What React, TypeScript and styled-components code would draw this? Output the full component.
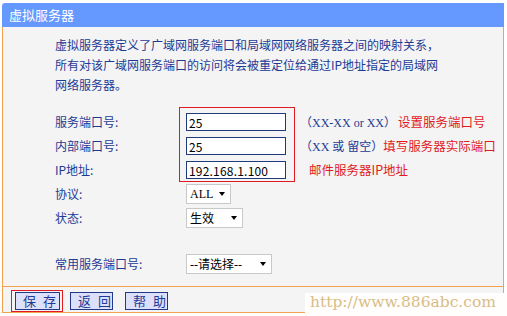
import React from "react";
import styled, { createGlobalStyle } from "styled-components";

const navy = "#1d3a94";
const orange = "#f0a24c";
const red = "#e01b1f";

const GlobalStyle = createGlobalStyle`
  html, body {
    margin: 0;
    padding: 0;
    background: #ffffff;
  }
  body {
    font-family: "Noto Sans CJK SC", "Liberation Sans", sans-serif;
    font-size: 12px;
  }
`;

const Page = styled.div`
  position: relative;
  width: 507px;
  height: 316px;
  padding: 3px 3px 0 2px;
  box-sizing: border-box;
  overflow: hidden;
`;

const Header = styled.div`
  height: 24px;
  background: #6699ff;
  border-top-left-radius: 3px;
  color: #ffffff;
  font-size: 13px;
  line-height: 24px;
  padding-left: 7px;
`;

const Content = styled.div`
  background: #f4f4f4;
  border: 1px solid ${orange};
  border-top: none;
  padding: 8px 0 12px 52px;
`;

const Description = styled.p`
  margin: 0;
  color: ${navy};
  line-height: 20px;
  white-space: nowrap;
`;

const FormBlock = styled.div`
  display: flex;
  align-items: flex-start;
  margin-top: 12px;
`;

const Column = styled.div<{ $width?: number; $padLeft?: number }>`
  display: flex;
  flex-direction: column;
  gap: 6px;
  padding-top: 6px;
  padding-left: ${({ $padLeft }) => $padLeft ?? 0}px;
  width: ${({ $width }) => ($width ? `${$width}px` : "auto")};
`;

const Label = styled.div`
  height: 18px;
  line-height: 18px;
  color: ${navy};
  white-space: nowrap;
`;

const RedBox = styled.div`
  display: flex;
  flex-direction: column;
  gap: 6px;
  border: 1px solid ${red};
  padding: 5px 8px 2px 6px;
`;

const TextInput = styled.input`
  width: 100px;
  height: 18px;
  box-sizing: border-box;
  margin: 0;
  border: 1px solid #1f3b7c;
  background: #ffffff;
  padding: 0 2px;
  font-family: "Noto Sans CJK SC", "Liberation Sans", sans-serif;
  font-size: 12px;
  letter-spacing: 0.2px;
  color: #000000;
  outline: none;
`;

const Hint = styled.div<{ $indent?: number }>`
  height: 18px;
  line-height: 18px;
  color: ${navy};
  white-space: nowrap;
  font-family: "Liberation Serif", "Noto Sans CJK SC", serif;
  font-size: 12px;
  padding-left: ${({ $indent }) => $indent ?? 0}px;
`;

const Note = styled.span<{ $gap?: number }>`
  color: ${red};
  font-family: "Noto Sans CJK SC", sans-serif;
  font-size: 12.5px;
  margin-left: ${({ $gap }) => $gap ?? 0}px;
`;

const FieldRow = styled.div<{ $gap: number }>`
  display: flex;
  align-items: center;
  margin-top: ${({ $gap }) => $gap}px;
`;

const RowLabel = styled(Label)`
  width: 131px;
`;

const SelectBox = styled.div<{ $width: number }>`
  display: flex;
  align-items: center;
  justify-content: space-between;
  width: ${({ $width }) => $width}px;
  height: 20px;
  box-sizing: border-box;
  border: 1px solid #c9c9c9;
  background: #ffffff;
  padding: 0 5px 0 3px;
  font-family: "Liberation Serif", "Noto Sans CJK SC", serif;
  font-size: 12px;
  color: #000000;
  white-space: nowrap;
`;

const Caret = styled.span`
  width: 0;
  height: 0;
  border-left: 3.5px solid transparent;
  border-right: 3.5px solid transparent;
  border-top: 4px solid #000000;
`;

const Footer = styled.div`
  display: flex;
  align-items: center;
  height: 22px;
  padding: 3px 0 0 8px;
  background: #f4f4f4;
  border: 1px solid ${orange};
  border-top: none;
`;

const Highlight = styled.div`
  display: flex;
  border: 1px solid ${red};
  padding: 1px 2px 1px 3px;
`;

const ActionButton = styled.button<{ $width: number; $offset?: number }>`
  width: ${({ $width }) => $width}px;
  height: 18px;
  margin: 0 0 0 ${({ $offset }) => $offset ?? 0}px;
  padding: 0 0 0 7px;
  border: 1px solid #24388a;
  background: #dde0fa;
  color: ${navy};
  font-family: "Noto Sans CJK SC", sans-serif;
  font-size: 13px;
  line-height: 16px;
  letter-spacing: 7px;
  white-space: pre;
`;

const Watermark = styled.div`
  position: absolute;
  left: 305px;
  right: 0;
  bottom: 0;
  height: 23px;
  background: #fffefc;
  padding-left: 5px;
  font-family: "DejaVu Serif", "Liberation Serif", serif;
  font-size: 15.5px;
  line-height: 18px;
  color: #d8bd87;
  white-space: nowrap;
`;

type SelectProps = { width: number; value: string };

const Select = ({ width, value }: SelectProps) => (
  <SelectBox $width={width}>
    <span>{value}</span>
    <Caret />
  </SelectBox>
);

export default function App() {
  return (
    <Page>
      <GlobalStyle />
      <Header>虚拟服务器</Header>
      <Content>
        <Description>
          虚拟服务器定义了广域网服务端口和局域网网络服务器之间的映射关系，
          <br />
          所有对该广域网服务端口的访问将会被重定位给通过IP地址指定的局域网
          <br />
          网络服务器。
        </Description>

        <FormBlock>
          <Column $width={124}>
            <Label>服务端口号:</Label>
            <Label>内部端口号:</Label>
            <Label>IP地址:</Label>
          </Column>
          <RedBox>
            <TextInput readOnly defaultValue="25" />
            <TextInput readOnly defaultValue="25" />
            <TextInput readOnly defaultValue="192.168.1.100" />
          </RedBox>
          <Column $padLeft={5}>
            <Hint>
              （XX-XX or XX）<Note $gap={2}>设置服务端口号</Note>
            </Hint>
            <Hint>
              （XX 或 留空）<Note>填写服务器实际端口</Note>
            </Hint>
            <Hint $indent={9}>
              <Note>邮件服务器IP地址</Note>
            </Hint>
          </Column>
        </FormBlock>

        <FieldRow $gap={2}>
          <RowLabel>协议:</RowLabel>
          <Select width={45} value="ALL" />
        </FieldRow>
        <FieldRow $gap={4}>
          <RowLabel>状态:</RowLabel>
          <Select width={57} value="生效" />
        </FieldRow>
        <FieldRow $gap={26}>
          <RowLabel>常用服务端口号:</RowLabel>
          <Select width={86} value="--请选择--" />
        </FieldRow>
      </Content>

      <Footer>
        <Highlight>
          <ActionButton $width={45}>保存</ActionButton>
        </Highlight>
        <ActionButton $width={43} $offset={7}>返回</ActionButton>
        <ActionButton $width={43} $offset={12}>帮助</ActionButton>
      </Footer>

      <Watermark>http://www.886abc.com</Watermark>
    </Page>
  );
}
